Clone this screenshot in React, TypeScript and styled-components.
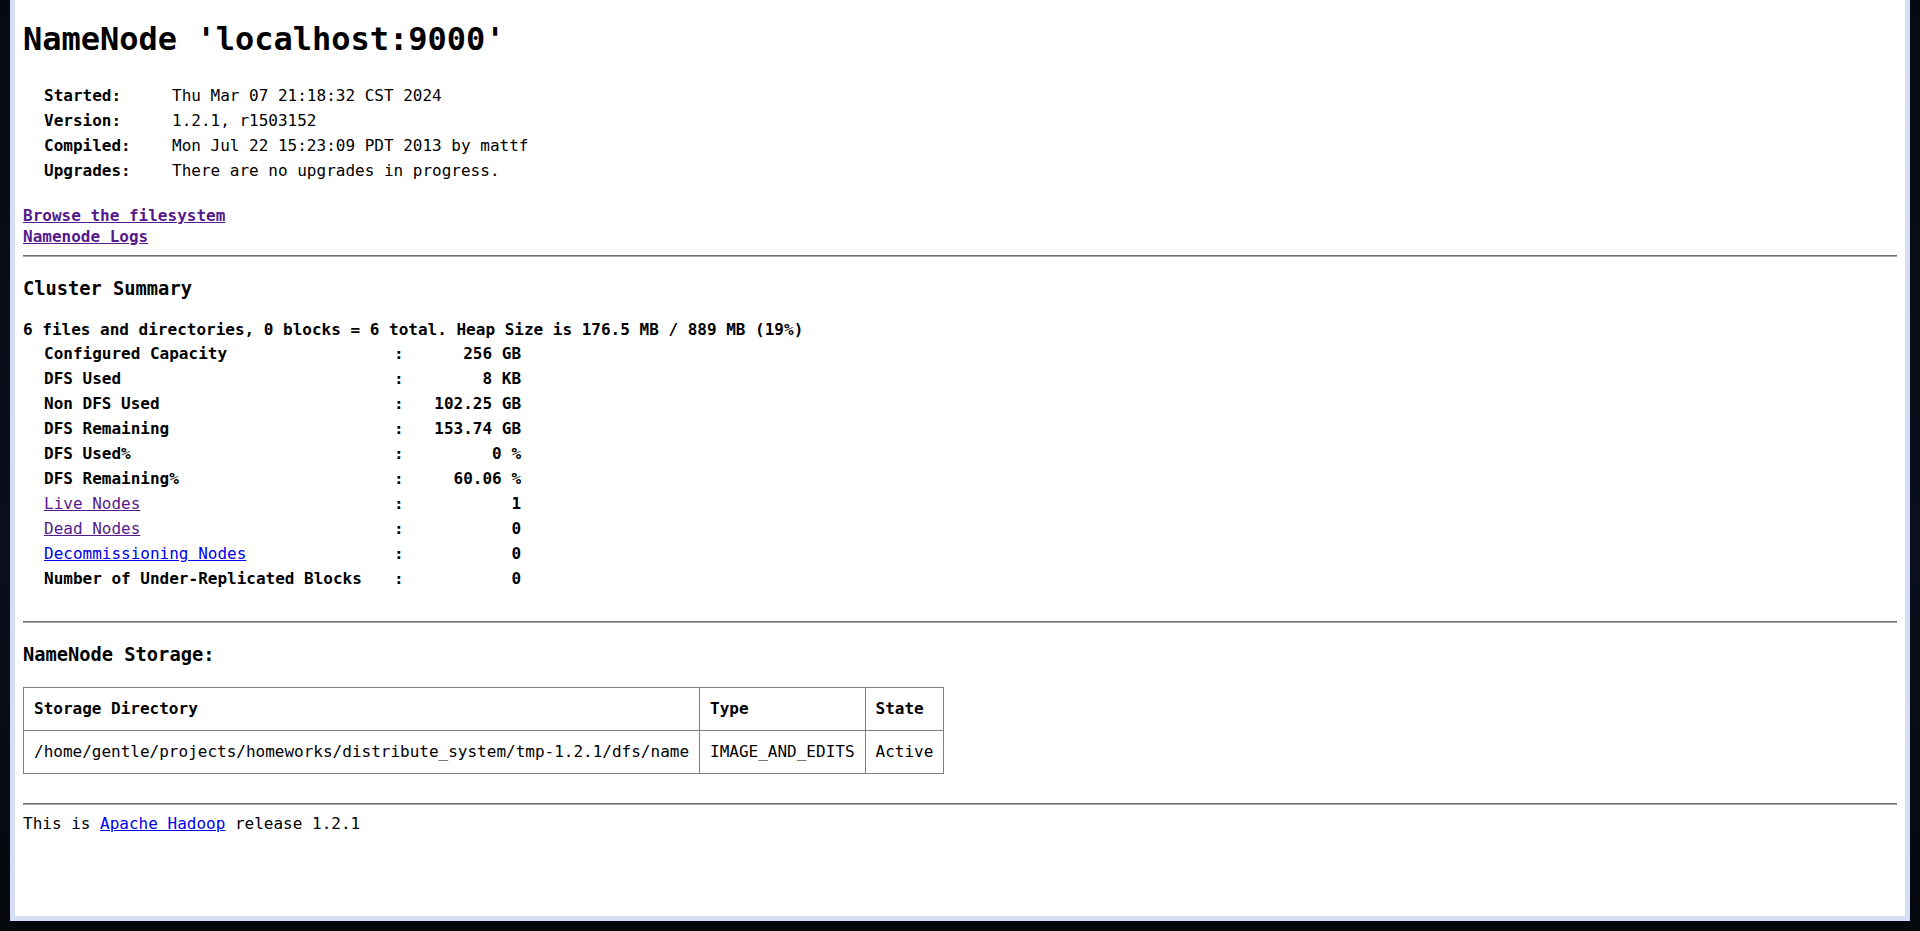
import React from 'react'
import styled, { createGlobalStyle } from 'styled-components'

const GlobalStyle = createGlobalStyle`
  html, body {
    margin: 0;
    padding: 0;
    background: #070a12;
  }

  body {
    font-family: "DejaVu Sans Mono", "Liberation Mono", monospace;
    font-size: 16px;
    color: #000;
  }
`

const Desktop = styled.div`
  box-sizing: border-box;
  height: 931px;
  padding: 0 10px 10px;
  background: linear-gradient(180deg, #060912 0%, #0a0f1c 60%, #05070d 100%);
`

const Window = styled.div`
  box-sizing: border-box;
  height: 921px;
  border: 5px solid #d4dcf6;
  border-top: none;
  background: #fff;
  overflow: hidden;
`

const Page = styled.div`
  padding: 0 8px;
`

const Title = styled.h1`
  margin: 20px 0 0;
  font-size: 32px;
  line-height: 38px;
  font-weight: bold;
`

const InfoGrid = styled.div`
  display: grid;
  grid-template-columns: 128px auto;
  margin-top: 25px;
  padding-left: 21px;
  line-height: 25px;
  white-space: pre;
`

const InfoLabel = styled.span`
  font-weight: bold;
`

const InfoValue = styled.span``

const LinkList = styled.div`
  display: flex;
  flex-direction: column;
  align-items: flex-start;
  margin-top: 22px;
  line-height: 21px;
`

const Link = styled.a<{ $visited?: boolean; $bold?: boolean }>`
  color: ${(p) => (p.$visited ? '#551a8b' : '#0000ee')};
  font-weight: ${(p) => (p.$bold ? 'bold' : 'normal')};
  text-decoration: underline;
  cursor: pointer;
`

const Rule = styled.hr<{ $gap: number }>`
  margin: ${(p) => p.$gap}px 0 0;
  height: 0;
  border: none;
  border-top: 1px solid #6e6e6e;
  border-bottom: 1px solid #a8a8a8;
`

const SectionTitle = styled.h3`
  margin: 21px 0 0;
  font-size: 18.72px;
  line-height: 22px;
  font-weight: bold;
`

const SummaryLine = styled.div`
  margin-top: 19px;
  line-height: 21px;
  font-weight: bold;
`

const SummaryGrid = styled.div`
  display: grid;
  grid-template-columns: 350px 9.63px 117.4px;
  margin-top: 1px;
  padding-left: 21px;
  line-height: 25px;
  font-weight: bold;
  white-space: pre;
`

const SummaryValue = styled.span`
  text-align: right;
`

const StorageTable = styled.table`
  margin-top: 21px;
  border-collapse: collapse;
  font-size: 16px;

  td {
    padding: 10px;
    border: 1px solid #808080;
    line-height: 22px;
    white-space: nowrap;
  }

  thead td {
    font-weight: bold;
  }
`

const Footer = styled.div`
  margin-top: 8px;
  line-height: 21px;
`

const info = [
  ['Started:', 'Thu Mar 07 21:18:32 CST 2024'],
  ['Version:', '1.2.1, r1503152'],
  ['Compiled:', 'Mon Jul 22 15:23:09 PDT 2013 by mattf'],
  ['Upgrades:', 'There are no upgrades in progress.'],
]

type SummaryRow = { label: string; value: string; link?: 'visited' | 'new' }

const summary: SummaryRow[] = [
  { label: 'Configured Capacity', value: '256 GB' },
  { label: 'DFS Used', value: '8 KB' },
  { label: 'Non DFS Used', value: '102.25 GB' },
  { label: 'DFS Remaining', value: '153.74 GB' },
  { label: 'DFS Used%', value: '0 %' },
  { label: 'DFS Remaining%', value: '60.06 %' },
  { label: 'Live Nodes', value: '1', link: 'visited' },
  { label: 'Dead Nodes', value: '0', link: 'visited' },
  { label: 'Decommissioning Nodes', value: '0', link: 'new' },
  { label: 'Number of Under-Replicated Blocks', value: '0' },
]

export default function App() {
  return (
    <>
      <GlobalStyle />
      <Desktop>
        <Window>
          <Page>
            <Title>NameNode 'localhost:9000'</Title>

            <InfoGrid>
              {info.map(([label, value]) => (
                <React.Fragment key={label}>
                  <InfoLabel>{label}</InfoLabel>
                  <InfoValue>{value}</InfoValue>
                </React.Fragment>
              ))}
            </InfoGrid>

            <LinkList>
              <Link $visited $bold>Browse the filesystem</Link>
              <Link $visited $bold>Namenode Logs</Link>
            </LinkList>

            <Rule $gap={8} />

            <SectionTitle>Cluster Summary</SectionTitle>
            <SummaryLine>
              6 files and directories, 0 blocks = 6 total. Heap Size is 176.5 MB / 889 MB (19%)
            </SummaryLine>

            <SummaryGrid>
              {summary.map((row) => (
                <React.Fragment key={row.label}>
                  <span>
                    {row.link ? (
                      <Link $visited={row.link === 'visited'}>{row.label}</Link>
                    ) : (
                      row.label
                    )}
                  </span>
                  <span>:</span>
                  <SummaryValue>{row.value}</SummaryValue>
                </React.Fragment>
              ))}
            </SummaryGrid>

            <Rule $gap={30} />

            <SectionTitle>NameNode Storage:</SectionTitle>
            <StorageTable>
              <thead>
                <tr>
                  <td>Storage Directory</td>
                  <td>Type</td>
                  <td>State</td>
                </tr>
              </thead>
              <tbody>
                <tr>
                  <td>/home/gentle/projects/homeworks/distribute_system/tmp-1.2.1/dfs/name</td>
                  <td>IMAGE_AND_EDITS</td>
                  <td>Active</td>
                </tr>
              </tbody>
            </StorageTable>

            <Rule $gap={29} />

            <Footer>
              This is <Link>Apache Hadoop</Link> release 1.2.1
            </Footer>
          </Page>
        </Window>
      </Desktop>
    </>
  )
}
